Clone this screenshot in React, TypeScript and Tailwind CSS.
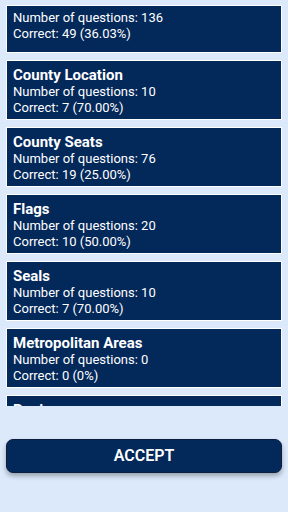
import React from 'react';

type Stat = {
  title?: string;
  total: number;
  correct: string;
};

const stats: Stat[] = [
  { title: 'County Location', total: 10, correct: '7 (70.00%)' },
  { title: 'County Seats', total: 76, correct: '19 (25.00%)' },
  { title: 'Flags', total: 20, correct: '10 (50.00%)' },
  { title: 'Seals', total: 10, correct: '7 (70.00%)' },
  { title: 'Metropolitan Areas', total: 0, correct: '0 (0%)' },
  { title: 'Regions', total: 0, correct: '0 (0%)' },
];

function StatCard({ stat }: { stat: Stat }) {
  return (
    <div className="shrink-0 border border-white bg-[#03285a] px-[6px] pt-[6px] pb-[4px] text-white">
      <div className="text-[15px] leading-[17px] font-bold">{stat.title}</div>
      <div className="text-[13px] leading-[15.5px]">Number of questions: {stat.total}</div>
      <div className="text-[13px] leading-[15.5px]">Correct: {stat.correct}</div>
    </div>
  );
}

export default function App() {
  return (
    <div className="flex h-[512px] w-[288px] flex-col bg-[#dbe9fb] font-['Roboto',sans-serif]">
      {/* Scrollable stats list */}
      <div className="flex h-[406px] flex-col gap-[7px] overflow-hidden px-[6px] pt-[5px]">
        {/* overall totals */}
        <div className="shrink-0 border border-white bg-[#03285a] px-[6px] pt-[4px] pb-[11px] text-white">
          <div className="text-[13px] leading-[15.5px]">Number of questions: 136</div>
          <div className="text-[13px] leading-[15.5px]">Correct: 49 (36.03%)</div>
        </div>
        {stats.map((s) => (
          <StatCard key={s.title} stat={s} />
        ))}
      </div>

      {/* Accept button */}
      <div className="mt-[33px] px-[6px]">
        <button className="h-[34px] w-full rounded-[7px] border border-[#0a1f40] bg-[#03285a] text-[16px] font-semibold text-white shadow-[0_3px_5px_rgba(0,0,0,0.3)]">
          ACCEPT
        </button>
      </div>
    </div>
  );
}
